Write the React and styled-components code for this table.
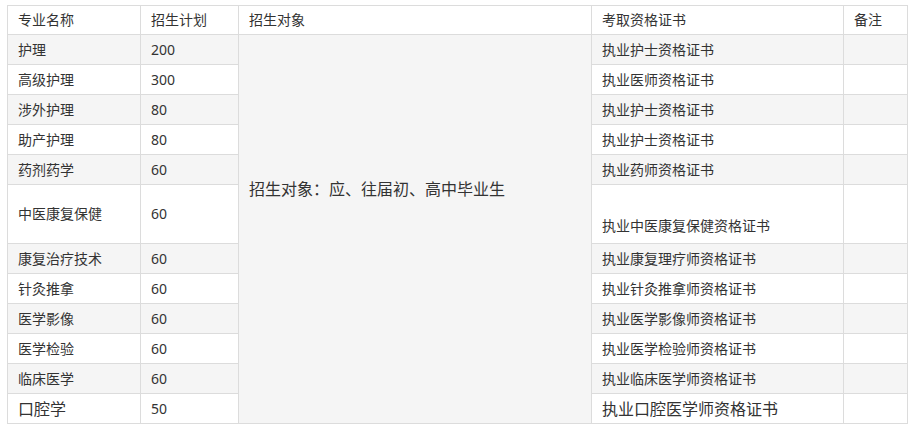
import React from "react";
import styled, { createGlobalStyle } from "styled-components";

const Global = createGlobalStyle`
  html, body { margin: 0; padding: 0; background: #fff; }
  body { font-family: "Noto Sans", "Noto Sans CJK SC", sans-serif; color: #333; }
`;

const Page = styled.div`
  padding: 5px 7px 0 7px;
`;

const Table = styled.table`
  border-collapse: collapse;
  table-layout: fixed;
  width: 900px;
  font-size: 14px;
  line-height: 24px;
  color: #333;
`;

const Row = styled.tr`
  height: ${(p) => p.$h || 30}px;
  background: ${(p) => (p.$shade ? "#f5f5f5" : "#fff")};
`;

const Cell = styled.td`
  border: 1px solid #dcdcdc;
  padding: 0 10px;
  vertical-align: middle;
  text-align: left;
  font-weight: normal;
  font-size: ${(p) => (p.$big ? 16 : 14)}px;
  white-space: nowrap;
  overflow: hidden;
`;

const HeadCell = styled(Cell).attrs({ as: "th" })``;

const MergedCell = styled(Cell)`
  background: #f5f5f5;
  font-size: 16px;
  padding-bottom: 80px;
`;

const Spacer = styled.span`
  display: block;
  height: 24px;
`;

const rows = [
  ["护理", "200", "执业护士资格证书"],
  ["高级护理", "300", "执业医师资格证书"],
  ["涉外护理", "80", "执业护士资格证书"],
  ["助产护理", "80", "执业护士资格证书"],
  ["药剂药学", "60", "执业药师资格证书"],
  ["中医康复保健", "60", "执业中医康复保健资格证书", "tall"],
  ["康复治疗技术", "60", "执业康复理疗师资格证书"],
  ["针灸推拿", "60", "执业针灸推拿师资格证书"],
  ["医学影像", "60", "执业医学影像师资格证书"],
  ["医学检验", "60", "执业医学检验师资格证书"],
  ["临床医学", "60", "执业临床医学师资格证书"],
  ["口腔学", "50", "执业口腔医学师资格证书", "big"],
];

export default function App() {
  return (
    <Page>
      <Global />
      <Table>
        <colgroup>
          <col style={{ width: 133 }} />
          <col style={{ width: 98 }} />
          <col style={{ width: 353 }} />
          <col style={{ width: 252 }} />
          <col style={{ width: 64 }} />
        </colgroup>
        <tbody>
          <Row $h={29}>
            <HeadCell>专业名称</HeadCell>
            <HeadCell>招生计划</HeadCell>
            <HeadCell>招生对象</HeadCell>
            <HeadCell>考取资格证书</HeadCell>
            <HeadCell>备注</HeadCell>
          </Row>
          {rows.map(([name, plan, cert, kind], i) => (
            <Row key={name} $shade={i % 2 === 0} $h={kind === "tall" ? 59 : 30}>
              <Cell $big={kind === "big"}>{name}</Cell>
              <Cell>{plan}</Cell>
              {i === 0 && (
                <MergedCell rowSpan={rows.length}>
                  招生对象：应、往届初、高中毕业生
                </MergedCell>
              )}
              <Cell $big={kind === "big"}>
                {kind === "tall" && <Spacer />}
                {cert}
              </Cell>
              <Cell />
            </Row>
          ))}
        </tbody>
      </Table>
    </Page>
  );
}
